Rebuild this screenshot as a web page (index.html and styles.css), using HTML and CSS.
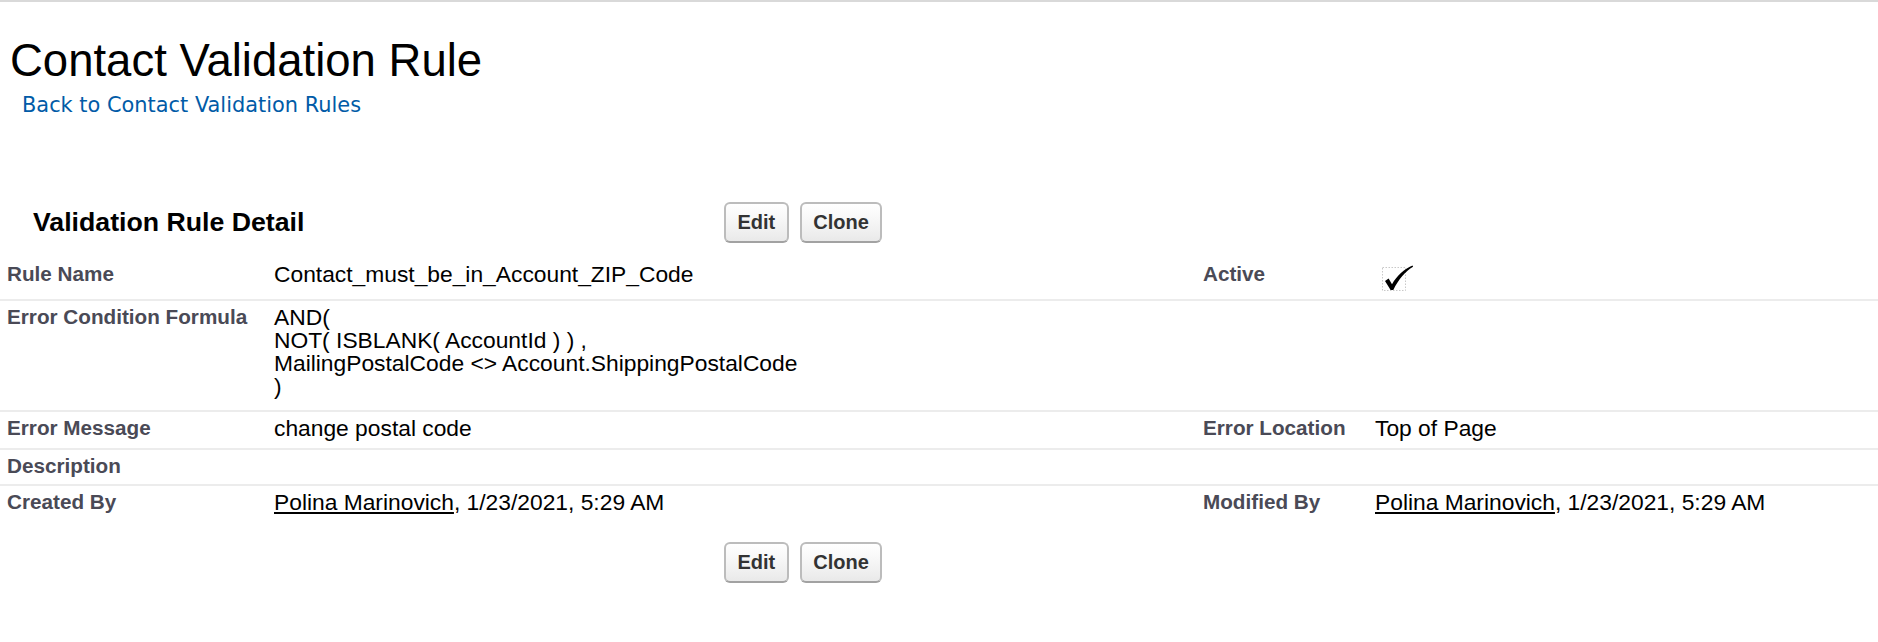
FILE: index.html
```html
<!DOCTYPE html>
<html lang="en">
<head>
<meta charset="utf-8">
<title>Contact Validation Rule</title>
<link rel="stylesheet" href="styles.css">
</head>
<body>
<div class="topbar"></div>
<div class="page-header">
  <h1 class="page-title">Contact Validation Rule</h1>
  <a class="breadcrumb" href="#">Back to Contact Validation Rules</a>
</div>
<div class="block">
  <div class="block-header">
    <div class="block-title"><h2>Validation Rule Detail</h2></div>
    <div class="buttons">
      <button class="btn" type="button">Edit</button>
      <button class="btn" type="button">Clone</button>
    </div>
  </div>
  <div class="detail">
    <div class="row sep">
      <div class="label">Rule Name</div>
      <div class="data">Contact_must_be_in_Account_ZIP_Code</div>
      <div class="label">Active</div>
      <div class="data">
        <svg class="checkbox" width="34" height="28" viewBox="0 0 34 28" aria-label="Checked">
          <rect x="0.5" y="4.5" width="23" height="23" fill="none" stroke="#c8c8c8" stroke-width="1" stroke-dasharray="1.5 1.5"/>
          <path d="M3 18 L6.6 15.6 L10 21.3 C15 12.5 22 6 30.5 2.5 L31.1 3.7 C23.5 8.3 16.6 16 11.3 27 L8.6 27 Z" fill="#000"/>
        </svg>
      </div>
    </div>
    <div class="row sep">
      <div class="label">Error Condition Formula</div>
      <div class="data formula">AND(<br>NOT( ISBLANK( AccountId ) ) ,<br>MailingPostalCode &lt;&gt; Account.ShippingPostalCode<br>)</div>
      <div class="label"></div>
      <div class="data"></div>
    </div>
    <div class="row sep">
      <div class="label">Error Message</div>
      <div class="data">change postal code</div>
      <div class="label">Error Location</div>
      <div class="data">Top of Page</div>
    </div>
    <div class="row sep">
      <div class="label">Description</div>
      <div class="data"></div>
      <div class="label"></div>
      <div class="data"></div>
    </div>
    <div class="row">
      <div class="label">Created By</div>
      <div class="data"><a class="user" href="#">Polina Marinovich</a>, 1/23/2021, 5:29 AM</div>
      <div class="label">Modified By</div>
      <div class="data"><a class="user" href="#">Polina Marinovich</a>, 1/23/2021, 5:29 AM</div>
    </div>
  </div>
  <div class="block-footer">
    <div class="block-title"></div>
    <div class="buttons">
      <button class="btn" type="button">Edit</button>
      <button class="btn" type="button">Clone</button>
    </div>
  </div>
</div>
</body>
</html>
```

FILE: styles.css
```css
html, body {
  margin: 0;
  padding: 0;
  background: #ffffff;
}

body {
  font-family: "Liberation Sans", Arial, Helvetica, sans-serif;
  color: #000000;
}

.topbar {
  height: 2px;
  background: #d9d9d9;
}

.page-header {
  padding: 36px 0 0 10px;
}

.page-title {
  margin: 0;
  font-size: 45.5px;
  line-height: 45px;
  font-weight: normal;
  color: #000000;
}

.breadcrumb {
  display: inline-block;
  margin: 10px 0 0 12px;
  font-family: "DejaVu Sans", Verdana, sans-serif;
  font-size: 20.9px;
  line-height: 24px;
  color: #015ba7;
  text-decoration: none;
}

.block {
  margin-top: 85px;
}

.block-header,
.block-footer {
  display: flex;
  align-items: flex-start;
}

.block-title {
  width: 691px;
  padding-left: 33px;
  flex: none;
}

.block-title h2 {
  margin: 0;
  font-size: 26.7px;
  line-height: 41px;
  font-weight: bold;
  color: #000000;
}

.buttons {
  display: flex;
  gap: 11px;
}

.btn {
  height: 41px;
  padding: 0 11.5px;
  border: 2px solid #bcbcbc;
  border-bottom-color: #a2a2a2;
  border-radius: 6px;
  background: linear-gradient(#ffffff, #f3f3f3 60%, #e9e9e9);
  font-family: "Liberation Sans", Arial, sans-serif;
  font-size: 20px;
  font-weight: bold;
  color: #333333;
  cursor: pointer;
}

.detail {
  margin-top: 15px;
}

.row {
  display: grid;
  grid-template-columns: 266px 930px 171px 1fr;
  padding: 5px 0 8px;
}

.row.sep {
  border-bottom: 2px solid #ececec;
}

.label {
  padding-left: 7px;
  padding-top: 1px;
  font-size: 20.7px;
  line-height: 20px;
  font-weight: bold;
  color: #4a4a56;
}

.data {
  padding-left: 8px;
  font-size: 22.8px;
  line-height: 23px;
  color: #000000;
}

.formula {
  padding-bottom: 4px;
}

.checkbox {
  display: block;
  margin: 0 0 0 7px;
  overflow: visible;
}

.user {
  color: #000000;
  text-decoration: underline;
}

.block-footer {
  margin-top: 20px;
}
```
